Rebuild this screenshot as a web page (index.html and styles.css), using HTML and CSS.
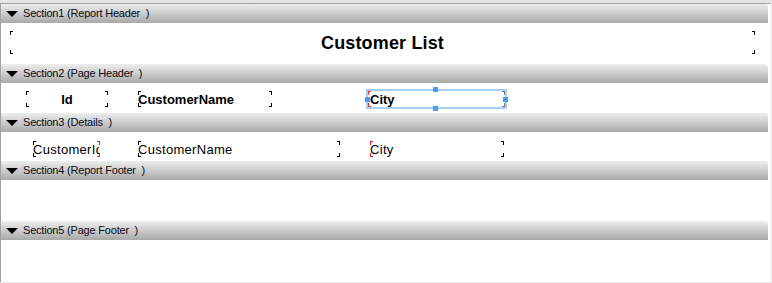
FILE: index.html
```html
<!DOCTYPE html>
<html>
<head>
<meta charset="utf-8">
<link rel="stylesheet" href="styles.css">
</head>
<body>
<div class="designer">
  <div class="band"><span class="tri"></span>Section1 (Report Header&nbsp; )</div>
  <div class="area h41">
    <div class="field marks title">Customer List</div>
  </div>
  <div class="band"><span class="tri"></span>Section2 (Page Header&nbsp; )</div>
  <div class="area h30">
    <div class="field marks hdr f-id">Id</div>
    <div class="field marks hdr f-name">CustomerName</div>
    <div class="field marks hdr f-city selected">City
      <span class="handle h-t"></span><span class="handle h-b"></span><span class="handle h-l"></span><span class="handle h-r"></span>
    </div>
  </div>
  <div class="band"><span class="tri"></span>Section3 (Details&nbsp; )</div>
  <div class="area h29">
    <div class="field marks det d-id"><span class="clip">CustomerId</span></div>
    <div class="field marks det d-name">CustomerName</div>
    <div class="field marks det d-city">City</div>
  </div>
  <div class="band"><span class="tri"></span>Section4 (Report Footer&nbsp; )</div>
  <div class="area h41"></div>
  <div class="band"><span class="tri"></span>Section5 (Page Footer&nbsp; )</div>
  <div class="area h41"></div>
</div>
</body>
</html>
```
FILE: styles.css
```css
html, body {
  margin: 0;
  padding: 0;
  background: #e6e6e6;
}
body {
  width: 772px;
  height: 283px;
  overflow: hidden;
  font-family: "Liberation Sans", Arial, sans-serif;
  color: #000;
}
.designer {
  margin-top: 3px;
  width: 769px;
  height: 278px;
  background: #fff;
  border-left: 1px solid #a0a0a0;
  border-top: 1px solid #a0a0a0;
  border-right: 1px solid #fdfdfd;
}
.band {
  width: 767px;
  height: 19px;
  line-height: 19px;
  font-size: 11px;
  letter-spacing: -0.2px;
  display: flex;
  align-items: center;
  background: linear-gradient(#eeeeee, #a9a9a9);
  border-top-right-radius: 3px;
  white-space: pre;
  color: #0a0a14;
}
.tri {
  width: 0;
  height: 0;
  margin: 1px 5px 0 5px;
  border-left: 6px solid transparent;
  border-right: 6px solid transparent;
  border-top: 6px solid #000;
}
.area {
  position: relative;
  background: #fff;
}
.h41 { height: 41px; }
.h30 { height: 30px; }
.h29 { height: 29px; }

.field {
  position: absolute;
  box-sizing: border-box;
  white-space: nowrap;
  --ml: #000;
  --mr: #000;
}
.marks {
  background:
    linear-gradient(var(--ml), var(--ml)) 0 0 / 3px 1px no-repeat,
    linear-gradient(var(--ml), var(--ml)) 0 0 / 1px 4px no-repeat,
    linear-gradient(var(--ml), var(--ml)) 0 100% / 3px 1px no-repeat,
    linear-gradient(var(--ml), var(--ml)) 0 100% / 1px 4px no-repeat,
    linear-gradient(var(--mr), var(--mr)) 100% 0 / 3px 1px no-repeat,
    linear-gradient(var(--mr), var(--mr)) 100% 0 / 1px 4px no-repeat,
    linear-gradient(var(--mr), var(--mr)) 100% 100% / 3px 1px no-repeat,
    linear-gradient(var(--mr), var(--mr)) 100% 100% / 1px 4px no-repeat;
}
.title {
  left: 9px;
  top: 8px;
  width: 745px;
  height: 23px;
  text-align: center;
  font-weight: bold;
  font-size: 18px;
  line-height: 25px;
  letter-spacing: 0.15px;
}
.hdr {
  top: 8px;
  height: 16px;
  font-size: 13px;
  font-weight: bold;
  line-height: 18px;
}
.f-id { left: 25px; width: 82px; text-align: center; }
.f-name { left: 137px; width: 134px; }
.f-city { left: 367px; width: 137px; padding-left: 2px; --ml: #e03030; --mr: #777; }
.selected {
  box-shadow: 0 0 0 2px #a9cdf3;
}
.handle {
  position: absolute;
  width: 5px;
  height: 5px;
  background: #4aa0f0;
}
.h-t { left: 65px; top: -4px; }
.h-b { left: 65px; bottom: -4px; }
.h-l { left: -3px; top: 6px; }
.h-r { right: -3px; top: 6px; }

.det {
  top: 9px;
  height: 16px;
  font-size: 13px;
  line-height: 18px;
  letter-spacing: 0.3px;
}
.d-id { left: 32px; width: 67px; --mr: #e02020; }
.clip {
  display: block;
  width: 66px;
  overflow: hidden;
}
.d-name { left: 137px; width: 202px; }
.d-city { left: 369px; width: 134px; --ml: #e02020; }
```
